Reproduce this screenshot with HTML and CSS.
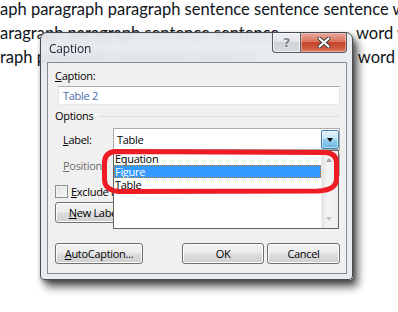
FILE: index.html
```html
<!DOCTYPE html>
<html>
<head>
<meta charset="utf-8">
<link rel="stylesheet" href="styles.css">
</head>
<body>
<div class="doc">
  <p class="line">aph paragraph paragraph sentence sentence sentence w</p>
  <p class="line split l2"><span>aragraph paragraph sentence sentence</span><span>word w</span></p>
  <p class="line split l3"><span>raph paragraph paragraph sentence</span><span>word</span></p>
</div>

<div class="dialog">
  <div class="titlebar">
    <span class="title">Caption</span>
    <div class="caps">
      <div class="cap help"><span>?</span></div>
      <div class="cap close">
        <svg width="14" height="11" viewBox="0 0 14 11"><path d="M2.5 1.5 L11.5 9.5 M11.5 1.5 L2.5 9.5" stroke="#3b3b3b" stroke-width="4" stroke-linecap="round"/><path d="M2.5 1.5 L11.5 9.5 M11.5 1.5 L2.5 9.5" stroke="#fff" stroke-width="2.2" stroke-linecap="round"/></svg>
      </div>
    </div>
  </div>
  <div class="client">
    <div class="lbl"><u>C</u>aption:</div>
    <div class="textbox">Table 2</div>
    <div class="grouphead"><span>Options</span><i class="rule"></i></div>
    <div class="row">
      <span class="rowlbl"><u>L</u>abel:</span>
      <div class="combo"><span class="val">Table</span><span class="drop"><i class="tri"></i></span></div>
    </div>
    <div class="row">
      <span class="rowlbl dim"><u>P</u>osition:</span>
      <div class="combo plain"></div>
    </div>
    <div class="check"><i class="box"></i><span class="cktext"><u>E</u>xclude label from caption</span></div>
    <div class="btnrow">
      <div class="btn wide"><span class="cut"><u>N</u>ew Label...</span></div>
    </div>
    <div class="btnrow bottom">
      <div class="btn auto"><u>A</u>utoCaption...</div>
      <div class="spacer"></div>
      <div class="btn ok">OK</div>
      <div class="btn cancel">Cancel</div>
    </div>

    <div class="list">
      <div class="items">
        <div class="item">Equation</div>
        <div class="item sel">Figure</div>
        <div class="item">Table</div>
      </div>
      <div class="scroll"><i class="up"></i><i class="down"></i></div>
    </div>
  </div>
</div>

<svg class="mark" width="398" height="312" viewBox="0 0 398 312">
  <path d="M326 152.5 L116 151.5 Q104.5 152 104.5 163 L104.5 180 Q105 190.5 119 191.5 L318 191 Q336.5 190 336.5 179 L336.5 162 Q336 153.5 326 152.5 Z" fill="none" stroke="#ee1c24" stroke-width="5" stroke-linejoin="round"/>
</svg>
</body>
</html>
```

FILE: styles.css
```css
html, body {
  margin: 0;
  padding: 0;
  width: 398px;
  height: 312px;
  overflow: hidden;
  background: #fff;
}
body {
  position: relative;
}
u { text-decoration: underline; text-underline-offset: 1px; }

.doc {
  font-family: Lato, "Open Sans", sans-serif;
  font-size: 16.5px;
  color: #0d1420;
  margin-top: -3px;
}
.line {
  margin: 0;
  height: 24px;
  line-height: 24px;
  white-space: nowrap;
}
.split {
  display: flex;
  justify-content: space-between;
}
.l2 { width: 410px; }
.l3 { width: 395px; }

.dialog {
  position: absolute;
  left: 40px;
  top: 32px;
  width: 313px;
  height: 248px;
  box-sizing: border-box;
  border: 1px solid #474c52;
  border-radius: 7px 7px 4px 4px;
  background: rgba(230, 233, 237, 0.9);
  backdrop-filter: blur(4px);
  box-shadow: 5px 7px 8px rgba(0,0,0,0.62), 1px 2px 4px rgba(0,0,0,0.35);
  display: flex;
  flex-direction: column;
  padding: 0 5px 5px 6px;
  font-family: "Open Sans", sans-serif;
  font-size: 11px;
  letter-spacing: -0.3px;
  color: #000;
}
.titlebar {
  height: 29px;
  display: flex;
  justify-content: space-between;
  align-items: flex-start;
}
.title {
  margin: 8px 0 0 2px;
  font-size: 12px;
  line-height: 15px;
  color: #1b2230;
  letter-spacing: -0.2px;
}
.caps {
  display: flex;
}
.cap {
  height: 20px;
  box-sizing: border-box;
  display: flex;
  align-items: center;
  justify-content: center;
  border: 1px solid #5a5f66;
  border-top: none;
}
.help {
  width: 28px;
  border-right: none;
  border-radius: 0 0 0 4px;
  background: linear-gradient(#f1f2f4, #e2e4e7 45%, #cfd2d6 50%, #d7dade);
  box-shadow: inset 0 0 0 1px rgba(255,255,255,0.6);
}
.help span {
  font-family: "DejaVu Sans", sans-serif;
  font-weight: bold;
  font-size: 13px;
  color: #7b7f86;
  text-shadow: 0 0 1px #fff, 0 0 2px #fff;
}
.close {
  width: 47px;
  border-radius: 0 0 4px 0;
  background: linear-gradient(#e9a899, #d97660 45%, #c8442b 50%, #cf5a3f 80%, #e0826a);
  box-shadow: inset 0 0 0 1px rgba(255,220,210,0.45);
}

.client {
  flex: 1;
  position: relative;
  border: 1px solid #878b91;
  background: #f0f0f0;
  padding: 5px 6px 0 7px;
  display: flex;
  flex-direction: column;
}
.lbl {
  line-height: 15px;
  height: 15px;
}
.textbox {
  margin: 3px 0 0 3px;
  height: 19px;
  box-sizing: border-box;
  border: 1px solid #abadb3;
  border-color: #abadb3 #dbdfe6 #e3e9ef #e2e3ea;
  background: #fff;
  color: #4b6aa8;
  line-height: 17px;
  padding-left: 4px;
}
.grouphead {
  margin-top: 3px;
  display: flex;
  align-items: center;
  line-height: 15px;
  height: 15px;
}
.rule {
  flex: 1;
  height: 1px;
  background: #d5dfe5;
  margin: 1px 0 0 5px;
}
.row {
  display: flex;
  align-items: center;
  height: 22px;
  margin-top: 5px;
}
.row + .row { margin-top: 4px; }
.rowlbl {
  width: 50px;
  padding-left: 8px;
}
.dim { color: #6d6d6d; }
.combo {
  flex: 1;
  height: 22px;
  box-sizing: border-box;
  border: 1px solid #acacac;
  background: #fff;
  display: flex;
  align-items: center;
  justify-content: space-between;
}
.combo .val { padding-left: 3px; }
.drop {
  width: 18px;
  height: 19px;
  box-sizing: border-box;
  border: 1px solid #3c7fb1;
  border-radius: 2px;
  background: linear-gradient(#e5f4fc, #c4e5f6 45%, #98d1ef 50%, #68b3db);
  box-shadow: inset 0 0 0 1px rgba(255,255,255,0.5);
  display: flex;
  align-items: center;
  justify-content: center;
}
.tri {
  width: 0; height: 0;
  border-left: 3.5px solid transparent;
  border-right: 3.5px solid transparent;
  border-top: 4px solid #000;
  margin-top: 1px;
}
.check {
  display: flex;
  align-items: center;
  margin-top: 9px;
  height: 13px;
}
.box {
  width: 13px;
  height: 13px;
  box-sizing: border-box;
  border: 1px solid #8e8f8f;
  background: linear-gradient(135deg, #dcdcdc, #fdfdfd);
  box-shadow: inset 0 0 0 1px #f4f4f4;
  margin-right: 3px;
}
.cktext { white-space: nowrap; }
.btnrow {
  display: flex;
  gap: 6px;
  margin-top: 4px;
}
.btnrow.bottom {
  margin-top: 20px;
  gap: 3px;
}
.spacer { flex: 1; }
.btn {
  height: 21px;
  box-sizing: border-box;
  border: 1px solid #707070;
  border-radius: 3px;
  background: linear-gradient(#f2f2f2, #ebebeb 48%, #dddddd 52%, #cfcfcf);
  box-shadow: inset 0 0 0 1px #fcfcfc;
  display: flex;
  align-items: center;
  justify-content: center;
  line-height: 15px;
  white-space: nowrap;
}
.wide { width: 86px; }
.auto { width: 88px; }
.ok { width: 82px; }
.cancel { width: 73px; }

.list {
  position: absolute;
  left: 65px;
  top: 87px;
  width: 226px;
  height: 79px;
  box-sizing: border-box;
  border: 1px solid #646464;
  background: #fff;
  display: flex;
}
.items {
  flex: 1;
  padding-top: 1px;
}
.item {
  height: 13px;
  line-height: 13px;
  padding-left: 1px;
  box-sizing: border-box;
}
.item.sel {
  background: #3399ff;
  color: #fff;
  outline: 1px dotted #d07a28;
  outline-offset: -1px;
}
.scroll {
  width: 16px;
  background: linear-gradient(90deg, #e3e3e3, #f3f3f3 30%, #eeeeee);
  border-left: 1px solid #ececec;
  position: relative;
}
.up, .down {
  position: absolute;
  left: 4px;
  width: 0; height: 0;
  border-left: 3.5px solid transparent;
  border-right: 3.5px solid transparent;
}
.up { top: 7px; border-bottom: 4px solid #a6a6a6; }
.down { bottom: 7px; border-top: 4px solid #c4c4c4; }

.mark {
  position: absolute;
  left: 0;
  top: 0;
  pointer-events: none;
}
```
